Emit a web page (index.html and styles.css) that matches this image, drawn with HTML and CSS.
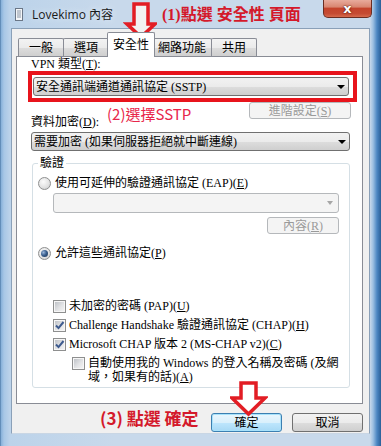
FILE: index.html
```html
<!DOCTYPE html>
<html lang="zh-Hant">
<head>
  <meta charset="UTF-8">
  <title>Lovekimo 內容</title>
  <link rel="stylesheet" href="styles.css">
</head>
<body>
  <div class="window">
    <div class="titlebar">
      <svg class="app-icon" width="8" height="13" viewBox="0 0 8 13">
        <rect x="0.5" y="0.5" width="7" height="12" fill="#f4f6f8" stroke="#6b7787"/>
        <path d="M2 3h4M2 5h4M2 7h4M2 9h4" stroke="#8a96a6" stroke-width="1"/>
      </svg>
      <span class="title">Lovekimo 內容</span>
      <button class="close-btn">x</button>
    </div>

    <div class="client">
      <div class="tabs">
        <div class="tab">一般</div>
        <div class="tab">選項</div>
        <div class="tab active">安全性</div>
        <div class="tab">網路功能</div>
        <div class="tab">共用</div>
      </div>

      <div class="panel">
        <div class="label">VPN 類型(<u>T</u>):</div>
        <div class="highlight">
          <div class="combo"><span>安全通訊端通道通訊協定 (SSTP)</span><i class="arrow"></i></div>
        </div>
        <div class="advanced-row">
          <span class="note-2">(2)選擇SSTP</span>
          <button class="btn btn-advanced" disabled>進階設定(<u>S</u>)</button>
        </div>
        <div class="label label-enc">資料加密(<u>D</u>):</div>
        <div class="combo"><span>需要加密 (如果伺服器拒絕就中斷連線)</span><i class="arrow"></i></div>

        <fieldset class="group">
          <legend>驗證</legend>
          <div class="option opt-eap"><span class="radio"></span><span>使用可延伸的驗證通訊協定 (EAP)(<u>E</u>)</span></div>
          <div class="combo combo-disabled"><span></span><i class="arrow"></i></div>
          <div class="props-row"><button class="btn btn-props" disabled>內容(<u>R</u>)</button></div>
          <div class="option opt-allow"><span class="radio checked"></span><span>允許這些通訊協定(<u>P</u>)</span></div>
          <div class="option check-row first-check"><span class="check"></span><span>未加密的密碼 (PAP)(<u>U</u>)</span></div>
          <div class="option check-row">
            <span class="check"><svg width="11" height="11" viewBox="0 0 11 11"><path d="M2 5.5l2.5 2.6L9.5 2" fill="none" stroke="#3d5a8e" stroke-width="2"/></svg></span>
            <span>Challenge Handshake 驗證通訊協定 (CHAP)(<u>H</u>)</span>
          </div>
          <div class="option check-row">
            <span class="check"><svg width="11" height="11" viewBox="0 0 11 11"><path d="M2 5.5l2.5 2.6L9.5 2" fill="none" stroke="#3d5a8e" stroke-width="2"/></svg></span>
            <span>Microsoft CHAP 版本 2 (MS-CHAP v2)(<u>C</u>)</span>
          </div>
          <div class="option check-row nested"><span class="check"></span><span>自動使用我的 Windows 的登入名稱及密碼 (及網<br>域，如果有的話)(<u>A</u>)</span></div>
        </fieldset>
      </div>

      <div class="actions">
        <button class="btn btn-default">確定</button>
        <button class="btn">取消</button>
      </div>
    </div>

    <!-- red annotations drawn over the dialog -->
    <svg class="arrow-1" width="34" height="38" viewBox="0 0 34 38">
      <polygon points="11,2 25,2 25,22 32,22 18,35 4,22 11,22" fill="#f2f2f2" stroke="#e21d24" stroke-width="3.5"/>
    </svg>
    <div class="note-1">(1)點選 安全性 頁面</div>

    <svg class="arrow-3" width="38" height="36" viewBox="0 0 38 36">
      <polygon points="11,2 26,2 26,17 35,17 18.5,33 2,17 11,17" fill="#ffffff" stroke="#e21d24" stroke-width="3.5"/>
    </svg>
    <div class="note-3">(3) 點選 確定</div>
  </div>
</body>
</html>
```

FILE: styles.css
```css
* {
  box-sizing: border-box;
}

body {
  margin: 0;
  width: 381px;
  height: 446px;
  overflow: hidden;
  font-family: "Liberation Serif", "Noto Sans CJK TC", serif;
  font-size: 12px;
  color: #000;
  background: #b9d1ea;
}

button {
  font: inherit;
}

.window {
  position: relative;
  height: 446px;
  display: flex;
  flex-direction: column;
  padding: 0 11px 12px;
  background: linear-gradient(to right, #3f6c9a 0, #86b0d9 1px, #a8c7e6 4px, #bcd3ea 10px, #c8d9eb 30%, #c8d9eb calc(100% - 11px), #9dc0e2 calc(100% - 8px), #4b86c2 calc(100% - 4px), #2a5f98 100%);
}

.titlebar {
  height: 28px;
  display: flex;
  align-items: center;
  padding-left: 4px;
}

.app-icon {
  margin-top: 1px;
}

.title {
  margin-left: 9px;
  font-family: "Open Sans", "Noto Sans CJK TC", sans-serif;
  font-size: 12px;
  color: #1a1a1a;
  text-shadow: 0 0 6px #e8f0f8;
}

.close-btn {
  margin-left: auto;
  margin-right: -2px;
  align-self: flex-start;
  width: 49px;
  height: 18px;
  padding: 0;
  border: 1px solid #6a2d22;
  border-top: none;
  border-radius: 0 0 5px 5px;
  background: linear-gradient(#e8ab9c 0, #d98772 40%, #c4442c 50%, #c54b33 80%, #d66a4c 100%);
  color: #fff;
  font-family: "DejaVu Sans", sans-serif;
  font-weight: bold;
  font-size: 13px;
  line-height: 15px;
  text-shadow: 0 0 2px #5a1a10, 0 0 1px #5a1a10;
}

.client {
  flex: 1;
  display: flex;
  flex-direction: column;
  background: #f0f0f0;
  border: 1px solid #8aa0b8;
  border-bottom-color: #c9d6e4;
  padding: 3px 6px 0 4px;
}

/* tab strip */
.tabs {
  height: 24px;
  display: flex;
  align-items: flex-end;
  margin-left: 2px;
}

.tab {
  height: 18px;
  min-width: 46px;
  padding: 0 5px;
  margin-left: -1px;
  display: flex;
  align-items: center;
  justify-content: center;
  line-height: 12px;
  border: 1px solid #898c95;
  border-bottom: none;
  border-radius: 2px 2px 0 0;
  background: linear-gradient(#f3f3f3 0, #ebebeb 50%, #dddddd 51%, #cfcfcf 100%);
}

.tab:first-child {
  margin-left: 0;
}

.tab.active {
  position: relative;
  z-index: 2;
  height: 25px;
  margin: 0 -2px -1px -2px;
  padding-bottom: 1px;
  background: #fff;
}

.panel {
  height: 348px;
  border: 1px solid #898c95;
  background: #fff;
  padding: 0 12px 0 14px;
}

.label {
  line-height: 14px;
  white-space: nowrap;
}

.label-enc {
  line-height: 12px;
}

.highlight {
  margin: 0 -7px 0 -3px;
  border: 4px solid #e8141c;
  padding: 2px 4px 2px 1px;
}

/* combo boxes */
.combo {
  display: flex;
  align-items: center;
  height: 19px;
  padding-left: 2px;
  border: 1px solid #707070;
  border-radius: 3px;
  background: linear-gradient(#f2f2f2 0, #ebebeb 50%, #dddddd 51%, #cfcfcf 100%);
}

.combo span {
  flex: 1;
  line-height: 14px;
  white-space: nowrap;
  overflow: hidden;
}

.combo .arrow {
  width: 0;
  height: 0;
  margin-right: 3px;
  border-left: 4px solid transparent;
  border-right: 4px solid transparent;
  border-top: 4px solid #000;
}

.label-enc + .combo {
  margin-top: 4px;
}

.combo-disabled {
  height: 20px;
  margin: 3px 0 0 15px;
  border-color: #b5b8bb;
  background: #f4f4f4;
}

.combo-disabled .arrow {
  margin-right: 5px;
  border-top-color: #a6a6a6;
  border-left-width: 3px;
  border-right-width: 3px;
}

.advanced-row {
  height: 14px;
  display: flex;
  align-items: flex-start;
}

.note-2 {
  margin: 3px 0 0 76px;
  font-family: "Noto Sans CJK TC", sans-serif;
  font-size: 15px;
  line-height: 18px;
  color: #e8264a;
  white-space: nowrap;
}

/* push buttons */
.btn {
  height: 19px;
  padding: 0;
  border: 1px solid #707070;
  border-radius: 3px;
  background: linear-gradient(#f2f2f2 0, #ebebeb 50%, #dddddd 51%, #cfcfcf 100%);
  color: #000;
  line-height: 14px;
}

.btn:disabled {
  border-color: #b5b8bb;
  background: #f4f4f4;
  color: #9a9a9a;
}

.btn-advanced {
  margin-left: auto;
  margin-right: -1px;
  width: 102px;
  height: 17px;
}

.btn-props {
  width: 72px;
  height: 17px;
}

.btn-default {
  border-color: #3c7fb1;
  background: linear-gradient(#eaf6fd 0, #d9f0fc 50%, #bee6fd 51%, #a7d9f5 100%);
  box-shadow: inset 0 0 0 1px #a8e2fb;
}

/* authentication group */
.group {
  margin: 6px 0 0 1px;
  padding: 0 10px 3px 5px;
  border: 1px solid #d5dfe5;
  border-radius: 3px;
  min-width: 0;
}

.group legend {
  padding: 0 2px;
  line-height: 12px;
}

.option {
  display: flex;
  align-items: center;
  gap: 4px;
  height: 14px;
  line-height: 14px;
  white-space: nowrap;
}

.opt-eap {
  margin-top: 7px;
}

.props-row {
  display: flex;
  justify-content: flex-end;
  margin-top: 4px;
}

.opt-allow {
  margin-top: 12px;
}

.check-row {
  margin: 5px 0 0 15px;
  gap: 3px;
}

.first-check {
  margin-top: 39px;
}

.nested {
  height: auto;
  align-items: flex-start;
  margin-left: 34px;
}

.nested .check {
  margin-top: 1px;
}

.radio {
  position: relative;
  flex: none;
  width: 13px;
  height: 13px;
  border-radius: 50%;
  border: 1px solid #8e8f8f;
  background: radial-gradient(circle at 40% 35%, #fbfbfb 0, #e3e3e3 55%, #c4c6c9 100%);
}

.radio.checked::after {
  content: "";
  position: absolute;
  left: 2px;
  top: 2px;
  width: 7px;
  height: 7px;
  border-radius: 50%;
  background: radial-gradient(circle at 35% 35%, #9ab6da 0, #3a5f8f 45%, #1c2f4e 100%);
}

.check {
  flex: none;
  display: flex;
  align-items: center;
  justify-content: center;
  width: 13px;
  height: 13px;
  border: 1px solid #8e8f8f;
  background: linear-gradient(135deg, #b8bcc2 0, #e2e3e5 55%, #f6f6f6 100%);
  box-shadow: inset 0 0 0 1px #f6f6f6;
}

.actions {
  display: flex;
  justify-content: flex-end;
  gap: 10px;
  margin-top: 9px;
}

.actions .btn {
  width: 71px;
}

/* annotations */
.arrow-1 {
  position: absolute;
  left: 123px;
  top: 2px;
}

.arrow-3 {
  position: absolute;
  left: 230px;
  top: 381px;
}

.note-1,
.note-3 {
  position: absolute;
  font-family: "Liberation Serif", "Noto Sans CJK TC", serif;
  font-weight: bold;
  color: #d4192b;
  white-space: nowrap;
}

.note-1 {
  left: 162px;
  top: 5px;
  font-size: 16px;
  line-height: 20px;
}

.note-3 {
  left: 100px;
  top: 408px;
  font-size: 17px;
  line-height: 20px;
  font-family: "Noto Sans CJK TC", sans-serif;
}
```
